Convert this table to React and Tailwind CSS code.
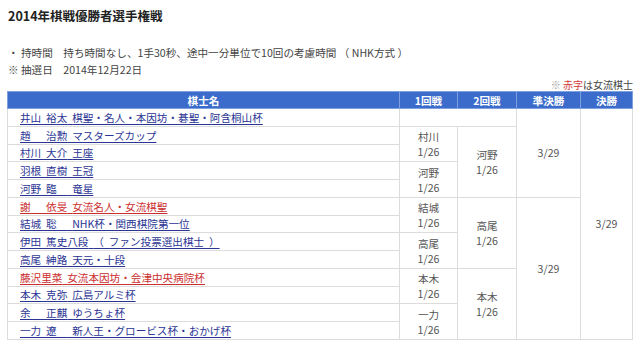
const players = [
  { name: '井山 裕太', title: '棋聖・名人・本因坊・碁聖・阿含桐山杯' },
  { name: '趙　 治勲', title: 'マスターズカップ' },
  { name: '村川 大介', title: '王座' },
  { name: '羽根 直樹', title: '王冠' },
  { name: '河野 臨　', title: '竜星' },
  { name: '謝　 依旻', title: '女流名人・女流棋聖', woman: true },
  { name: '結城 聡　', title: 'NHK杯・関西棋院第一位' },
  { name: '伊田 篤史八段', title: '（ ファン投票選出棋士 ）' },
  { name: '高尾 紳路', title: '天元・十段' },
  { name: '藤沢里菜', title: '女流本因坊・会津中央病院杯', woman: true },
  { name: '本木 克弥', title: '広島アルミ杯' },
  { name: '余　 正麒', title: 'ゆうちょ杯' },
  { name: '一力 遼　', title: '新人王・グロービス杯・おかげ杯' },
];

function Result({ who, date = '1/26' }) {
  return (
    <>
      {who}
      <br />
      {date}
    </>
  );
}

const cell = 'border border-[#dcdcdc] text-center align-middle text-[#555] leading-[15px]';

function NameCell({ p }) {
  return (
    <td className="border border-[#dcdcdc] pl-[12px] whitespace-pre [word-spacing:2.5px]">
      <a
        href="#"
        className={`underline underline-offset-2 ${p.woman ? 'text-[#cc2f2f]' : 'text-[#2b3594]'}`}
      >
        {p.name} {p.title}
      </a>
    </td>
  );
}

export default function App() {
  const row = 'h-[17.75px]';
  return (
    <div className="w-[640px] h-[348px] overflow-hidden bg-white font-['Noto_Sans_CJK_JP',sans-serif] text-[#444]">
      {/* Title */}
      <h1 className="pl-2 pt-[7px] text-[12.5px] font-bold leading-[18px] text-[#222]">
        2014年棋戦優勝者選手権戦
      </h1>

      {/* Rules */}
      <div className="mt-[19px] pl-2 text-[10.6px] leading-[17px]">
        <p>・ 持時間　持ち時間なし、1手30秒、途中一分単位で10回の考慮時間 （ NHK方式 ）</p>
        <p>※ 抽選日　2014年12月22日</p>
      </div>

      <p className="w-[633px] text-right text-[10px] leading-[13px]">
        <span className="text-[#999]">※ </span>
        <span className="text-[#d23a3a]">赤字</span>
        <span>は女流棋士</span>
      </p>

      {/* Bracket table */}
      <table className="ml-[7px] w-[626px] table-fixed border-collapse border border-[#d0d0d0] text-[10.6px]">
        <colgroup>
          <col className="w-[392px]" />
          <col className="w-[58px]" />
          <col className="w-[59px]" />
          <col className="w-[64px]" />
          <col />
        </colgroup>
        <thead>
          <tr className="h-[17px] bg-[#3b6ccb] text-white leading-[15px]">
            <th className="border border-[#7fa0de] font-bold">棋士名</th>
            <th className="border border-[#7fa0de] font-bold">1回戦</th>
            <th className="border border-[#7fa0de] font-bold">2回戦</th>
            <th className="border border-[#7fa0de] font-bold">準決勝</th>
            <th className="border border-[#7fa0de] font-bold">決勝</th>
          </tr>
        </thead>
        <tbody className="leading-[15px]">
          <tr className={row}>
            <NameCell p={players[0]} />
            <td colSpan={2} className={cell}></td>
            <td rowSpan={5} className={cell}>3/29</td>
            <td rowSpan={13} className={cell}>3/29</td>
          </tr>
          <tr className={row}>
            <NameCell p={players[1]} />
            <td rowSpan={2} className={cell}><Result who="村川" /></td>
            <td rowSpan={4} className={cell}><Result who="河野" /></td>
          </tr>
          <tr className={row}>
            <NameCell p={players[2]} />
          </tr>
          <tr className={row}>
            <NameCell p={players[3]} />
            <td rowSpan={2} className={cell}><Result who="河野" /></td>
          </tr>
          <tr className={row}>
            <NameCell p={players[4]} />
          </tr>
          <tr className={row}>
            <NameCell p={players[5]} />
            <td rowSpan={2} className={cell}><Result who="結城" /></td>
            <td rowSpan={4} className={cell}><Result who="高尾" /></td>
            <td rowSpan={8} className={cell}>3/29</td>
          </tr>
          <tr className={row}>
            <NameCell p={players[6]} />
          </tr>
          <tr className={row}>
            <NameCell p={players[7]} />
            <td rowSpan={2} className={cell}><Result who="高尾" /></td>
          </tr>
          <tr className={row}>
            <NameCell p={players[8]} />
          </tr>
          <tr className={row}>
            <NameCell p={players[9]} />
            <td rowSpan={2} className={cell}><Result who="本木" /></td>
            <td rowSpan={4} className={cell}><Result who="本木" /></td>
          </tr>
          <tr className={row}>
            <NameCell p={players[10]} />
          </tr>
          <tr className={row}>
            <NameCell p={players[11]} />
            <td rowSpan={2} className={cell}><Result who="一力" /></td>
          </tr>
          <tr className={row}>
            <NameCell p={players[12]} />
          </tr>
        </tbody>
      </table>
    </div>
  );
}
